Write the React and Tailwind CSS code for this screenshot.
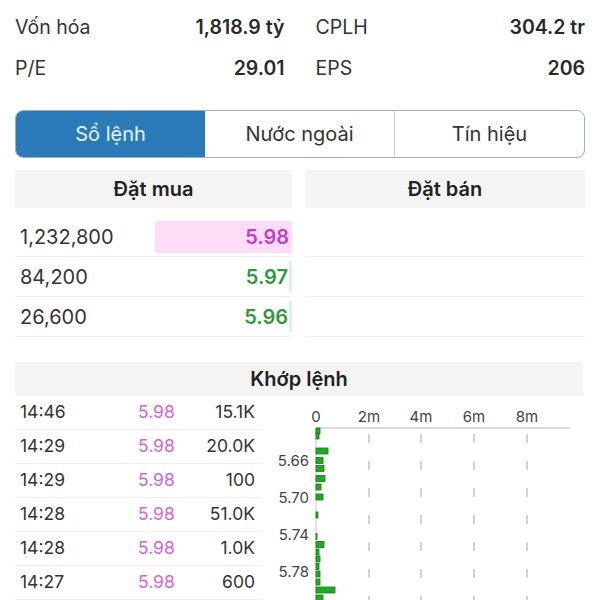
import React from "react";

const bars = [
  [431, 4], [436, 3], [451, 12], [460.5, 7], [468.5, 8], [478.5, 9], [487, 5], [497, 7],
  [515, 2], [536.5, 1], [544.5, 8], [552, 3], [559, 4], [566.5, 3], [574, 4], [582, 4],
  [590, 19], [598, 7],
];

const trades = [
  ["14:46", "5.98", "15.1K"],
  ["14:29", "5.98", "20.0K"],
  ["14:29", "5.98", "100"],
  ["14:28", "5.98", "51.0K"],
  ["14:28", "5.98", "1.0K"],
  ["14:27", "5.98", "600"],
];

function Chart() {
  const xs = [101, 153, 206, 259];
  const dashYs = [38, 65, 92, 119, 146, 173, 200];
  return (
    <svg width="317" height="204" viewBox="0 0 317 204" className="block">
      <g fontFamily="Inter, sans-serif" fontSize="15" fill="#444">
        <text x="48" y="26" textAnchor="middle">0</text>
        <text x="101" y="26" textAnchor="middle">2m</text>
        <text x="153" y="26" textAnchor="middle">4m</text>
        <text x="206" y="26" textAnchor="middle">6m</text>
        <text x="259" y="26" textAnchor="middle">8m</text>
        <text x="41" y="70" textAnchor="end">5.66</text>
        <text x="41" y="107" textAnchor="end">5.70</text>
        <text x="41" y="144" textAnchor="end">5.74</text>
        <text x="41" y="181" textAnchor="end">5.78</text>
      </g>
      <line x1="48" y1="32" x2="302" y2="32" stroke="#b8b8b8" strokeWidth="1" />
      <line x1="48" y1="32" x2="48" y2="204" stroke="#c8c8c8" strokeWidth="1" />
      {xs.map((x) =>
        dashYs.map((y) => (
          <line key={x + "-" + y} x1={x} y1={y} x2={x} y2={y + 9} stroke="#c4c4c4" strokeWidth="1.5" />
        ))
      )}
      {bars.map(([y, w], i) => (
        <rect
          key={i}
          x="48"
          y={y - 396 - 3}
          width={w}
          height="6"
          fill="#22a922"
          stroke="#147a14"
          strokeWidth="0.8"
        />
      ))}
    </svg>
  );
}

export default function App() {
  return (
    <div
      className="w-[600px] h-[600px] overflow-hidden bg-white text-[#2a2a2a]"
      style={{ fontFamily: "Inter, 'Noto Sans', sans-serif" }}
    >
      <div className="px-[15px] pt-[7px]">
        {/* stats */}
        <div className="grid grid-cols-2 gap-x-[31px] text-[19.5px]">
          <div className="flex h-[41px] items-center justify-between">
            <span className="text-[#333]">Vốn hóa</span>
            <span className="font-semibold">1,818.9 tỷ</span>
          </div>
          <div className="flex h-[41px] items-center justify-between">
            <span className="text-[#333]">CPLH</span>
            <span className="font-semibold">304.2 tr</span>
          </div>
          <div className="flex h-[41px] items-center justify-between">
            <span className="text-[#333]">P/E</span>
            <span className="font-semibold">29.01</span>
          </div>
          <div className="flex h-[41px] items-center justify-between">
            <span className="text-[#333]">EPS</span>
            <span className="font-semibold">206</span>
          </div>
        </div>

        {/* tabs */}
        <div className="mt-[21px] flex h-[48px] overflow-hidden rounded-[8px] border border-[#9fb2c4] text-[20px]">
          <div className="flex flex-1 items-center justify-center bg-[#2b7bbb] text-[#e6f3ff]">Sổ lệnh</div>
          <div className="flex flex-1 items-center justify-center border-r border-[#c9d2da] text-[#333]">Nước ngoài</div>
          <div className="flex flex-1 items-center justify-center text-[#333]">Tín hiệu</div>
        </div>

        {/* order book */}
        <div className="mt-[12px] flex gap-[13px]">
          <div className="w-[277px]">
            <div className="flex h-[38px] items-center justify-center bg-[#f4f4f4] text-[20px] font-semibold text-[#222]">
              Đặt mua
            </div>
            <div className="mt-[9px] text-[20px]">
              <div className="flex h-[40px] items-center justify-between border-b border-[#f0f0f0]">
                <span className="pl-[5px] text-[#333]">1,232,800</span>
                <span className="flex h-[32px] w-[137px] items-center justify-end bg-[#fcdcf6] pr-[3px] font-semibold text-[#c33dc6]">
                  5.98
                </span>
              </div>
              <div className="flex h-[40px] items-center justify-between border-b border-[#f0f0f0]">
                <span className="pl-[5px] text-[#333]">84,200</span>
                <span className="flex h-[32px] items-center justify-end border-r-[3px] border-[#dcf5dc] pr-[1px] font-semibold text-[#2f9a3a]">
                  5.97
                </span>
              </div>
              <div className="flex h-[40px] items-center justify-between border-b border-[#f0f0f0]">
                <span className="pl-[5px] text-[#333]">26,600</span>
                <span className="flex h-[32px] items-center justify-end border-r-[3px] border-[#dcf5dc] pr-[1px] font-semibold text-[#2f9a3a]">
                  5.96
                </span>
              </div>
            </div>
          </div>
          <div className="w-[280px]">
            <div className="flex h-[38px] items-center justify-center bg-[#f4f4f4] text-[20px] font-semibold text-[#222]">
              Đặt bán
            </div>
            <div className="mt-[9px]">
              <div className="h-[40px] border-b border-[#f0f0f0]" />
              <div className="h-[40px] border-b border-[#f0f0f0]" />
              <div className="h-[40px] border-b border-[#f0f0f0]" />
            </div>
          </div>
        </div>

        {/* khop lenh */}
        <div className="mt-[25px] flex h-[34px] w-[568px] items-center justify-center bg-[#f4f4f4] text-[20px] font-semibold text-[#222]">
          Khớp lệnh
        </div>
        <div className="flex">
          <div className="w-[247px] text-[17.5px]">
            {trades.map(([t, p, v], i) => (
              <div key={i} className="flex h-[34px] items-center border-b border-[#f0f0f0]">
                <span className="w-[123px] pl-[5px] text-[#333]">{t}</span>
                <span className="w-[50px] text-[#d466d6]">{p}</span>
                <span className="flex-1 pr-[7px] text-right text-[#333]">{v}</span>
              </div>
            ))}
          </div>
          <div className="ml-[6px]">
            <Chart />
          </div>
        </div>
      </div>
    </div>
  );
}
